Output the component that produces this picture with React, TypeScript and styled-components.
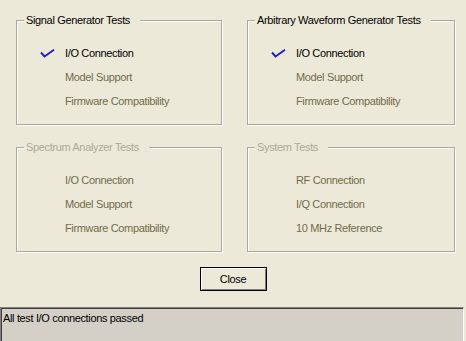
import React from 'react';
import { styled, createGlobalStyle } from 'styled-components';

const GlobalStyle = createGlobalStyle`
	html, body {
		margin: 0;
		padding: 0;
		background: #ece9d8;
	}
	body {
		font-family: 'Liberation Sans', Arial, sans-serif;
		font-size: 11px;
		letter-spacing: -0.35px;
	}
`;

const Dialog = styled.div`
	width: 466px;
	height: 341px;
	overflow: hidden;
	background: #ece9d8;
	display: flex;
	flex-direction: column;
	align-items: center;
`;

const Groups = styled.div`
	align-self: stretch;
	display: grid;
	grid-template-columns: 206px 208px;
	grid-auto-rows: 105px;
	column-gap: 25px;
	row-gap: 22px;
	padding: 20px 0 0 16px;
`;

const GroupBox = styled.div`
	position: relative;
	box-sizing: border-box;
	border: 1px solid #aca899;
	box-shadow:
		inset 1px 1px 0 #fff,
		1px 1px 0 #fff;
`;

const Legend = styled.span<{ $disabled?: boolean }>`
	position: absolute;
	top: -7px;
	left: 7px;
	padding: 0 10px 0 2px;
	line-height: 13px;
	background: #ece9d8;
	color: ${(p) => (p.$disabled ? '#aca899' : '#000')};
	font-weight: 400;
	white-space: nowrap;
`;

const ItemList = styled.ul`
	list-style: none;
	margin: 0;
	padding: 20px 0 0 23px;
`;

const Item = styled.li<{ $done?: boolean }>`
	display: grid;
	grid-template-columns: 25px auto;
	align-items: center;
	height: 24px;
	color: ${(p) => (p.$done ? '#000' : '#726c4a')};
	white-space: nowrap;
`;

const CheckSlot = styled.span`
	display: flex;
	align-items: center;
	height: 24px;
`;

const CloseButton = styled.button`
	margin-top: 15px;
	width: 67px;
	height: 24px;
	box-sizing: border-box;
	border: 1px solid #000;
	background: #ece9d8;
	box-shadow:
		inset 1px 1px 0 #fff,
		inset -1px -1px 0 #808080;
	font-family: 'Liberation Sans', Arial, sans-serif;
	font-size: 11px;
	letter-spacing: -0.35px;
	color: #000;
	padding: 0;
`;

const StatusBox = styled.div`
	align-self: stretch;
	margin: 16px 2px 0 0;
	flex: 1;
	box-sizing: border-box;
	background: #d4d0c8;
	border-top: 1px solid #808080;
	border-left: 1px solid #808080;
	border-right: 1px solid #fff;
	box-shadow: inset 1px 1px 0 #404040;
	padding: 4px 0 0 2px;
	color: #000;
	line-height: 13px;
`;

const Check = () => (
	<svg width='15' height='9' viewBox='0 0 15 9'>
		<polyline
			points='1,3.5 4.5,7.5 14,0.8'
			fill='none'
			stroke='#1c1cd8'
			strokeWidth='1.9'
		/>
	</svg>
);

interface TestGroup {
	title: string;
	disabled?: boolean;
	items: { label: string; done?: boolean }[];
}

const groups: TestGroup[] = [
	{
		title: 'Signal Generator Tests',
		items: [
			{ label: 'I/O Connection', done: true },
			{ label: 'Model Support' },
			{ label: 'Firmware Compatibility' },
		],
	},
	{
		title: 'Arbitrary Waveform Generator Tests',
		items: [
			{ label: 'I/O Connection', done: true },
			{ label: 'Model Support' },
			{ label: 'Firmware Compatibility' },
		],
	},
	{
		title: 'Spectrum Analyzer Tests',
		disabled: true,
		items: [
			{ label: 'I/O Connection' },
			{ label: 'Model Support' },
			{ label: 'Firmware Compatibility' },
		],
	},
	{
		title: 'System Tests',
		disabled: true,
		items: [
			{ label: 'RF Connection' },
			{ label: 'I/Q Connection' },
			{ label: '10 MHz Reference' },
		],
	},
];

const App: React.FC = () => {
	return (
		<>
			<GlobalStyle />
			<Dialog>
				<Groups>
					{groups.map((g) => (
						<GroupBox key={g.title}>
							<Legend $disabled={g.disabled}>{g.title}</Legend>
							<ItemList>
								{g.items.map((it) => (
									<Item key={it.label} $done={it.done}>
										<CheckSlot>{it.done && <Check />}</CheckSlot>
										<span>{it.label}</span>
									</Item>
								))}
							</ItemList>
						</GroupBox>
					))}
				</Groups>
				<CloseButton>Close</CloseButton>
				<StatusBox>All test I/O connections passed</StatusBox>
			</Dialog>
		</>
	);
};

export default App;
